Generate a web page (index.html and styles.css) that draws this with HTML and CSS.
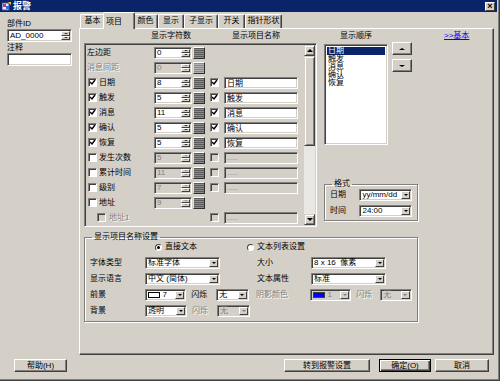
FILE: index.html
```html
<!DOCTYPE html>
<html lang="zh-CN">
<head>
  <meta charset="UTF-8">
  <title>报警</title>
  <link rel="stylesheet" href="styles.css">
</head>
<body>
  <div class="window">
    <div class="titlebar">
      <svg class="app-icon" width="9" height="9" viewBox="0 0 9 9">
        <rect x="0" y="1" width="7" height="7" fill="#f0f0f0" stroke="#3a5fa0" stroke-width="1"/>
        <rect x="1" y="2" width="3" height="3" fill="#d0308a"/>
        <rect x="4" y="4" width="3" height="3" fill="#3070d0"/>
        <path d="M6 0 L9 0 L9 3 Z" fill="#f4c040"/>
      </svg>
      <span class="title">报警</span>
      <span class="close">×</span>
    </div>

    <div class="content">
      <!-- left column: part id / comment -->
      <div class="side">
        <div class="lbl">部件ID</div>
        <div class="sunken idbox"><span>AD_0000</span><b class="arrows"><i class="up"></i><i class="down"></i></b></div>
        <div class="lbl gap">注释</div>
        <div class="sunken idbox"></div>
      </div>

      <div class="tabctl">
        <div class="tabs">
          <div class="tab w25">基本</div>
          <div class="tab sel">项目</div>
          <div class="tab w25">颜色</div>
          <div class="tab w26">显示</div>
          <div class="tab w34">子显示</div>
          <div class="tab w27">开关</div>
          <div class="tab w37">指针形状</div>
        </div>

        <div class="panel">
          <div class="heads">
            <span class="h1">显示字符数</span>
            <span class="h2">显示项目名称</span>
            <span class="h3">显示顺序</span>
            <a class="link">&gt;&gt;基本</a>
          </div>

          <div class="main">
            <div class="sunken scrollbox">
              <div class="rows">
                <div class="row">
                  <span class="name">左边距</span>
                  <div class="sunken spin"><span>0</span><b class="arrows"><i class="up"></i><i class="down"></i></b></div>
                  <i class="gbtn"></i>
                </div>
                <div class="row">
                  <span class="name off">消息间距</span>
                  <div class="sunken spin dis"><span>0</span><b class="arrows"><i class="up"></i><i class="down"></i></b></div>
                  <i class="gbtn dis"></i>
                </div>
                <div class="row">
                  <span class="name"><i class="chk on"></i>日期</span>
                  <div class="sunken spin"><span>8</span><b class="arrows"><i class="up"></i><i class="down"></i></b></div>
                  <i class="gbtn"></i>
                  <i class="chk on c2"></i>
                  <div class="sunken field">日期</div>
                </div>
                <div class="row">
                  <span class="name"><i class="chk on"></i>触发</span>
                  <div class="sunken spin"><span>5</span><b class="arrows"><i class="up"></i><i class="down"></i></b></div>
                  <i class="gbtn"></i>
                  <i class="chk on c2"></i>
                  <div class="sunken field">触发</div>
                </div>
                <div class="row">
                  <span class="name"><i class="chk on"></i>消息</span>
                  <div class="sunken spin"><span>11</span><b class="arrows"><i class="up"></i><i class="down"></i></b></div>
                  <i class="gbtn"></i>
                  <i class="chk on c2"></i>
                  <div class="sunken field">消息</div>
                </div>
                <div class="row">
                  <span class="name"><i class="chk on"></i>确认</span>
                  <div class="sunken spin"><span>5</span><b class="arrows"><i class="up"></i><i class="down"></i></b></div>
                  <i class="gbtn"></i>
                  <i class="chk on c2"></i>
                  <div class="sunken field">确认</div>
                </div>
                <div class="row">
                  <span class="name"><i class="chk on"></i>恢复</span>
                  <div class="sunken spin"><span>5</span><b class="arrows"><i class="up"></i><i class="down"></i></b></div>
                  <i class="gbtn"></i>
                  <i class="chk on c2"></i>
                  <div class="sunken field">恢复</div>
                </div>
                <div class="row">
                  <span class="name"><i class="chk"></i>发生次数</span>
                  <div class="sunken spin dis"><span>5</span><b class="arrows"><i class="up"></i><i class="down"></i></b></div>
                  <i class="gbtn"></i>
                  <i class="chk dis c2"></i>
                  <div class="sunken field dis">----</div>
                </div>
                <div class="row">
                  <span class="name"><i class="chk"></i>累计时间</span>
                  <div class="sunken spin dis"><span>11</span><b class="arrows"><i class="up"></i><i class="down"></i></b></div>
                  <i class="gbtn"></i>
                  <i class="chk dis c2"></i>
                  <div class="sunken field dis">----</div>
                </div>
                <div class="row">
                  <span class="name"><i class="chk"></i>级别</span>
                  <div class="sunken spin dis"><span>7</span><b class="arrows"><i class="up"></i><i class="down"></i></b></div>
                  <i class="gbtn"></i>
                  <i class="chk dis c2"></i>
                  <div class="sunken field dis">----</div>
                </div>
                <div class="row">
                  <span class="name"><i class="chk"></i>地址</span>
                  <div class="sunken spin dis"><span>9</span><b class="arrows"><i class="up"></i><i class="down"></i></b></div>
                  <i class="gbtn"></i>
                </div>
                <div class="row">
                  <span class="name sub off"><i class="chk dis"></i>地址1</span>
                  <span class="skip"></span>
                  <i class="chk dis c2"></i>
                  <div class="sunken field dis">----</div>
                </div>
              </div>
              <div class="vscroll">
                <i class="sbtn up"></i>
                <i class="thumb"></i>
                <i class="track"></i>
                <i class="sbtn down"></i>
              </div>
            </div>

            <div class="rightcol">
              <div class="order">
                <div class="sunken listbox">
                  <div class="item cur">日期</div>
                  <div class="item">触发</div>
                  <div class="item">消息</div>
                  <div class="item">确认</div>
                  <div class="item">恢复</div>
                </div>
                <div class="movers">
                  <i class="mbtn up"></i>
                  <i class="mbtn down"></i>
                </div>
              </div>
              <fieldset class="group fmt">
                <legend>格式</legend>
                <div class="frow"><span class="fl">日期</span><div class="sunken sel w55"><span>yy/mm/dd</span><i class="dd"></i></div></div>
                <div class="frow"><span class="fl">时间</span><div class="sunken sel w55"><span>24:00</span><i class="dd"></i></div></div>
              </fieldset>
            </div>
          </div>

          <fieldset class="group namecfg">
            <legend>显示项目名称设置</legend>
            <div class="radios">
              <label class="radio r1"><i class="rb on"></i>直接文本</label>
              <label class="radio"><i class="rb"></i>文本列表设置</label>
            </div>
            <div class="crow">
              <span class="cl">字体类型</span>
              <div class="sunken sel w75"><span>标准字体</span><i class="dd"></i></div>
              <span class="cl2">大小</span>
              <div class="sunken sel w75"><span>8 x 16&nbsp; 像素</span><i class="dd"></i></div>
            </div>
            <div class="crow">
              <span class="cl">显示语言</span>
              <div class="sunken sel w75"><span>中文 (简体)</span><i class="dd"></i></div>
              <span class="cl2">文本属性</span>
              <div class="sunken sel w75"><span>标准</span><i class="dd"></i></div>
            </div>
            <div class="crow">
              <span class="cl">前景</span>
              <div class="sunken sel w42"><i class="swatch"></i><span>7</span><i class="dd"></i></div>
              <span class="bl">闪烁</span>
              <div class="sunken sel w33"><span>无</span><i class="dd"></i></div>
              <span class="cl3 off">阴影颜色</span>
              <div class="sunken sel w42 dis"><i class="swatch blue"></i><span>1</span><i class="dd"></i></div>
              <span class="bl w24 off">闪烁</span>
              <div class="sunken sel w32 dis"><span>无</span><i class="dd"></i></div>
            </div>
            <div class="crow">
              <span class="cl">背景</span>
              <div class="sunken sel w42"><span>透明</span><i class="dd"></i></div>
              <span class="bl off">闪烁</span>
              <div class="sunken sel w33 dis"><span>无</span><i class="dd"></i></div>
            </div>
          </fieldset>
        </div>
      </div>
    </div>

    <div class="footer">
      <button class="btn help">帮助(H)</button>
      <button class="btn goto">转到报警设置</button>
      <button class="btn ok">确定(O)</button>
      <button class="btn cancel">取消</button>
    </div>
  </div>
</body>
</html>
```

FILE: styles.css
```css
* { box-sizing: border-box; }
body { margin: 0; background: #d4d0c8; font-family: "Liberation Sans", "Noto Sans CJK SC", sans-serif; font-size: 8px; line-height: 10px; color: #000; }
i { display: block; font-style: normal; }

/* 3d helpers */
.raised { background: #d4d0c8; border: 1px solid; border-color: #fff #404040 #404040 #fff; box-shadow: inset -1px -1px #808080; }
.sunken { background: #fff; border: 1px solid; border-color: #808080 #fff #fff #808080; box-shadow: inset 1px 1px #404040, inset -1px -1px #d4d0c8; }
.off { color: #808080; text-shadow: 1px 1px #fff; }

.window { width: 500px; height: 381px; padding: 0 3px 2px 0; box-shadow: inset -1px -1px #404040, inset -2px -2px #808080; overflow: hidden; }

.titlebar { height: 12px; background: #0a246a; display: flex; align-items: center; padding: 0 2px 0 2px; color: #fff; }
.app-icon { margin-right: 2px; }
.title { flex: 1; font-size: 9px; font-weight: bold; line-height: 12px; }
.close { width: 10px; height: 9px; background: #d4d0c8; border: 1px solid; border-color: #fff #404040 #404040 #fff; color: #000; font-size: 9px; font-weight: bold; line-height: 6px; text-align: center; }

.content { display: flex; height: 343px; }

.side { width: 79px; padding: 7px 0 0 7px; }
.side .lbl { height: 10px; }
.side .lbl.gap { margin-top: 1px; }
.idbox { width: 65px; height: 13px; display: flex; align-items: center; padding: 1px 1px 1px 2px; }
.idbox span { flex: 1; }

/* spin arrows */
.arrows { width: 9px; height: 100%; display: flex; flex-direction: column; }
.arrows i { flex: 1; background: #d4d0c8; border: 1px solid; border-color: #fff #404040 #404040 #fff; display: flex; align-items: center; justify-content: center; }
.arrows i::after { content: ""; border-left: 2px solid transparent; border-right: 2px solid transparent; }
.arrows .up::after { border-bottom: 1px solid #000; }
.arrows .down::after { border-top: 1px solid #000; }

/* tabs */
.tabctl { width: 415px; }
.tabs { display: flex; align-items: flex-end; height: 16px; padding-left: 1px; }
.tab { height: 14px; border: 1px solid; border-bottom: none; border-color: #fff #404040 #404040 #fff; box-shadow: inset -1px 0 #808080; border-radius: 2px 2px 0 0; text-align: center; line-height: 12px; }
.tab.sel { width: 32px; height: 17px; margin: 0 -2px -1px; position: relative; z-index: 1; background: #d4d0c8; line-height: 13px; }
.w25 { width: 25px; }
.w26 { width: 26px; }
.w27 { width: 27px; }
.w34 { width: 34px; }
.w37 { width: 37px; }

.panel { height: 327px; border: 1px solid; border-color: #fff #404040 #404040 #fff; box-shadow: inset -1px -1px #808080; padding-left: 4px; }

.heads { display: flex; height: 14px; line-height: 13px; }
.heads span { text-align: center; }
.h1 { margin-left: 64px; width: 46px; }
.h2 { margin-left: 32px; width: 60px; }
.h3 { margin-left: 38px; width: 64px; }
.link { margin-left: 56px; color: #0000ff; text-decoration: underline; }

.main { display: flex; height: 184px; }

.scrollbox { width: 233px; height: 184px; display: flex; background: #d4d0c8; padding: 1px; }
.rows { flex: 1; padding-left: 1px; }
.row { display: flex; align-items: center; height: 15px; }
.name { width: 67px; display: flex; align-items: center; gap: 2px; padding-left: 1px; }
.row .name:first-child:not(:has(.chk)) { padding-left: 0; }
.name.sub { padding-left: 10px; gap: 3px; }
.skip { width: 51px; }

.chk { width: 9px; height: 9px; background: #fff; border: 1px solid; border-color: #808080 #fff #fff #808080; box-shadow: inset 1px 1px #404040; }
.chk.on { background: #fff url("data:image/svg+xml,%3Csvg xmlns='http://www.w3.org/2000/svg' width='7' height='7'%3E%3Cpath d='M1 3 L3 5 L6 1' fill='none' stroke='%23000' stroke-width='1.4'/%3E%3C/svg%3E") center / 7px 7px no-repeat; }
.chk.dis { background-color: #d4d0c8; }
.c2 { margin-left: 5px; }

.spin { width: 38px; height: 12px; display: flex; align-items: center; padding: 1px 1px 1px 2px; }
.spin span { flex: 1; }
.spin.dis { background: #d4d0c8; color: #808080; }
.spin.dis .arrows i::after { border-top-color: #808080; border-bottom-color: #808080; }

.gbtn { width: 12px; height: 12px; margin-left: 1px; border: 1px solid; border-color: #fff #303030 #303030 #e0e0e0; background: repeating-linear-gradient(#5a5a5a 0 1px, #8c8c8c 1px 2px); }
.gbtn.dis { background: repeating-linear-gradient(#8c8c8c 0 1px, #b0b0b0 1px 2px); }

.field { width: 74px; height: 12px; margin-left: 5px; padding: 1px 2px; line-height: 10px; }
.field.dis { background: #d4d0c8; color: #a0a0a0; }

.vscroll { width: 11px; display: flex; flex-direction: column; }
.sbtn { height: 11px; background: #d4d0c8; border: 1px solid; border-color: #d4d0c8 #404040 #404040 #d4d0c8; box-shadow: inset 1px 1px #fff, inset -1px -1px #808080; display: flex; align-items: center; justify-content: center; }
.sbtn::after { content: ""; border-left: 3px solid transparent; border-right: 3px solid transparent; }
.sbtn.up::after { border-bottom: 3px solid #000; }
.sbtn.down::after { border-top: 3px solid #000; }
.thumb { height: 90px; background: #d4d0c8; border: 1px solid; border-color: #d4d0c8 #404040 #404040 #d4d0c8; box-shadow: inset 1px 1px #fff, inset -1px -1px #808080; }
.track { flex: 1; background: #e9e7e3; }

/* right column */
.rightcol { width: 94px; margin-left: 7px; }
.order { display: flex; align-items: flex-start; }
.listbox { width: 64px; height: 101px; margin-top: 1px; padding: 2px; }
.item { line-height: 8px; height: 8px; padding-left: 1px; }
.item.cur { background: #0a246a; color: #fff; }
.movers { margin: -1px 0 0 4px; display: flex; flex-direction: column; gap: 4px; }
.mbtn { width: 20px; height: 13px; background: #d4d0c8; border: 1px solid; border-color: #fff #404040 #404040 #fff; box-shadow: inset -1px -1px #808080; display: flex; align-items: center; justify-content: center; }
.mbtn::after { content: ""; border-left: 3px solid transparent; border-right: 3px solid transparent; }
.mbtn.up::after { border-bottom: 2px solid #000; }
.mbtn.down::after { border-top: 2px solid #000; }

/* group boxes */
.group { margin: 0; padding: 0 5px; border: 1px solid #808080; box-shadow: 1px 1px #fff, inset 1px 1px #fff; min-width: 0; }
.group legend { padding: 0 2px; margin-left: 2px; line-height: 10px; }

.fmt { width: 94px; height: 42px; margin-top: 34px; padding-top: 0; }
.frow { display: flex; align-items: center; height: 12px; margin-top: 4px; }
.frow:first-of-type { margin-top: 0; }
.fl { width: 31px; }

.sel { height: 12px; display: flex; align-items: center; padding: 1px 1px 1px 2px; }
.sel span { flex: 1; white-space: nowrap; overflow: hidden; }
.sel .dd { width: 9px; height: 100%; background: #d4d0c8; border: 1px solid; border-color: #fff #404040 #404040 #fff; display: flex; align-items: center; justify-content: center; }
.sel .dd::after { content: ""; border-left: 2px solid transparent; border-right: 2px solid transparent; border-top: 2px solid #000; }
.sel.dis { background: #d4d0c8; color: #808080; }
.sel.dis .dd::after { border-top-color: #808080; }
.w32 { width: 32px; }
.w33 { width: 33px; }
.w42 { width: 42px; }
.w55 { width: 55px; }
.w75 { width: 75px; }
.swatch { width: 12px; height: 6px; border: 1px solid #000; background: #fff; margin-right: 3px; }
.swatch.blue { background: #0000ff; border-color: #404040; }

.namecfg { width: 334px; height: 90px; margin-top: 5px; }
.radios { display: flex; height: 10px; align-items: center; padding-left: 65px; }
.radio { display: flex; align-items: center; gap: 3px; }
.radio.r1 { width: 92px; }
.rb { width: 7px; height: 7px; border-radius: 50%; background: #fff; border: 1px solid; border-color: #404040 #fff #fff #404040; display: flex; align-items: center; justify-content: center; }
.rb.on::after { content: ""; width: 3px; height: 3px; border-radius: 50%; background: #000; }
.crow { display: flex; align-items: center; height: 12px; margin-top: 4px; }
.radios + .crow { margin-top: 5px; }
.cl { width: 55px; }
.cl2 { width: 54px; margin-left: 37px; }
.cl3 { width: 54px; margin-left: 7px; }
.bl { width: 25px; margin-left: 5px; }
.bl.w24 { width: 24px; }

/* footer buttons */
.footer { display: flex; height: 13px; margin-top: 4px; padding-right: 8px; }
.btn { height: 13px; padding: 0; font: inherit; line-height: 10px; background: #d4d0c8; border: 1px solid; border-color: #fff #404040 #404040 #fff; box-shadow: inset -1px -1px #808080; color: #000; }
.help { width: 53px; margin-left: 14px; }
.goto { width: 86px; margin-left: auto; }
.ok { width: 52px; margin-left: 9px; border-color: #000; box-shadow: inset 1px 1px #fff, inset -1px -1px #404040, inset -2px -2px #808080; }
.cancel { width: 54px; margin-left: 4px; }
```
